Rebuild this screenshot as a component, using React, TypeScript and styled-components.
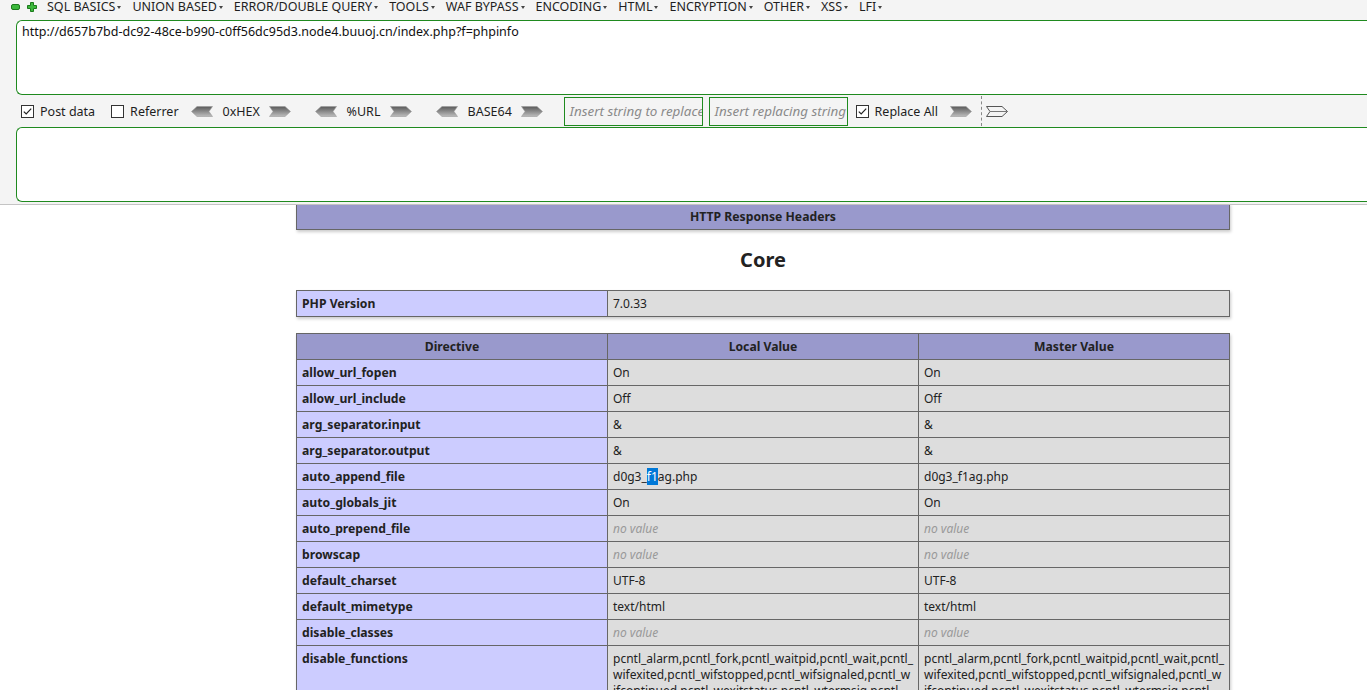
import React from "react";
import styled, { createGlobalStyle } from "styled-components";

const GlobalStyle = createGlobalStyle`
  html, body { margin: 0; padding: 0; background: #ffffff; }
  body { font-family: "Noto Sans", "Open Sans", sans-serif; color: #222; }
  * { box-sizing: border-box; }
`;

const Page = styled.div`
  width: 1367px;
  height: 690px;
  overflow: hidden;
  display: flex;
  flex-direction: column;
`;

const HackBar = styled.div`
  flex: none;
  height: 205px;
  background: #f4f4f4;
  border-bottom: 1px solid #c4c4c4;
  display: flex;
  flex-direction: column;
`;

const MenuBar = styled.div`
  height: 14px;
  display: flex;
  align-items: center;
  padding-left: 11px;
  font-size: 12.5px;
  line-height: 14px;
  color: #1e1e1e;
`;

const IconSlot = styled.span<{ $w: number }>`
  display: inline-flex;
  width: ${(p) => p.$w}px;
  height: 14px;
  align-items: center;
`;

const MenuItem = styled.span`
  display: inline-flex;
  align-items: center;
  margin-right: 11px;
  white-space: nowrap;
`;

const Caret = styled.span`
  display: inline-block;
  width: 0;
  height: 0;
  margin-left: 2px;
  margin-top: 1px;
  border-left: 2.5px solid transparent;
  border-right: 2.5px solid transparent;
  border-top: 3px solid #444;
`;

const AreaRow = styled.div<{ $top: number }>`
  margin-top: ${(p) => p.$top}px;
  padding-left: 16px;
  display: flex;
`;

const Area = styled.div`
  flex: 1;
  height: 75px;
  background: #ffffff;
  border: 1px solid #1f8a1f;
  border-right: none;
  border-radius: 6px 0 0 6px;
  padding: 3px 5px;
  font-size: 12.5px;
  line-height: 16px;
  color: #111;
  white-space: nowrap;
`;

const ToolRow = styled.div`
  height: 32px;
  display: flex;
  align-items: center;
  padding-left: 21px;
  font-size: 12.5px;
  color: #1e1e1e;
`;

const Check = styled.label<{ $gap: number }>`
  display: inline-flex;
  align-items: center;
  margin-right: ${(p) => p.$gap}px;
  white-space: nowrap;
  svg { margin-right: 6px; flex: none; }
`;

const Encoder = styled.span<{ $gap: number }>`
  display: inline-flex;
  align-items: center;
  margin-right: ${(p) => p.$gap}px;
  white-space: nowrap;
`;

const EncLabel = styled.span<{ $w: number }>`
  display: inline-block;
  width: ${(p) => p.$w}px;
  margin: 0 9px 0 10px;
`;

const ReplaceInput = styled.div<{ $gap: number }>`
  flex: none;
  width: 139px;
  height: 29px;
  margin-right: ${(p) => p.$gap}px;
  border: 1px solid #1f8a1f;
  background: #f4f4f4;
  padding: 0 5px;
  display: flex;
  align-items: center;
  overflow: hidden;
  white-space: nowrap;
  font-style: italic;
  font-size: 13.4px;
  color: #8a8a8a;
`;

const Dashed = styled.span`
  width: 0;
  height: 30px;
  border-left: 1px dashed #888;
  margin: 0 4px 0 9px;
`;

const Viewport = styled.div`
  flex: 1;
  overflow: hidden;
  background: #ffffff;
`;

const Content = styled.div`
  margin-top: -2px;
  padding-left: 296px;
  font-size: 12px;
`;

const InfoTable = styled.table<{ $gap?: number }>`
  border-collapse: collapse;
  border: 0;
  width: 934px;
  table-layout: fixed;
  box-shadow: 1px 2px 3px #ccc;
  margin-bottom: ${(p) => p.$gap ?? 0}px;
`;

const Cell = styled.td`
  border: 1px solid #666;
  padding: 4px 5px;
  vertical-align: baseline;
  font-size: 12.2px;
  line-height: 17px;
  color: #222;
`;

const HeadCell = styled.th`
  border: 1px solid #666;
  padding: 4px 5px;
  font-size: 12.2px;
  line-height: 17px;
  background: #9999cc;
  font-weight: bold;
  text-align: center;
  color: #222;
`;

const KeyCell = styled(Cell)`
  background: #ccccff;
  font-weight: bold;
`;

const ValCell = styled(Cell)`
  background: #dddddd;
  font-size: 12px;
  word-wrap: break-word;
  overflow-wrap: anywhere;
  line-height: 16px;
`;

const NoValue = styled.i`
  color: #999;
`;

const Sel = styled.span`
  background: #0078d7;
  color: #ffffff;
`;

const Heading = styled.h2`
  margin: 17px 0;
  width: 934px;
  text-align: center;
  font-size: 20px;
  line-height: 26px;
  font-weight: bold;
  color: #222;
`;

const Minus = () => (
  <svg width="9" height="6" viewBox="0 0 9 6">
    <rect x="0.5" y="0.5" width="8" height="5" rx="1.5" fill="#3cb83c" stroke="#1c7a1c" />
  </svg>
);

const Plus = () => (
  <svg width="10" height="10" viewBox="0 0 10 10">
    <path d="M3.5 0.5h3v3h3v3h-3v3h-3v-3h-3v-3h3z" fill="#3cb83c" stroke="#1c7a1c" strokeWidth="1" />
  </svg>
);

const CheckBox = ({ on }: { on: boolean }) => (
  <svg width="13" height="13" viewBox="0 0 13 13">
    <rect x="0.5" y="0.5" width="12" height="12" fill="#fff" stroke="#333" />
    {on && <path d="M2.8 6.6 L5.2 9 L10.2 3.6" fill="none" stroke="#222" strokeWidth="1.2" />}
  </svg>
);

const ArrowLeft = () => (
  <svg width="22" height="11" viewBox="0 0 22 11">
    <defs>
      <linearGradient id="gl" x1="0" y1="0" x2="0" y2="1">
        <stop offset="0" stopColor="#5a5a5a" />
        <stop offset="1" stopColor="#bdbdbd" />
      </linearGradient>
    </defs>
    <path d="M0.5 5.5 L6 0.5 H21.5 L18 5.5 L21.5 10.5 H6 Z" fill="url(#gl)" stroke="#9a9a9a" strokeWidth="0.6" />
  </svg>
);

const ArrowRight = ({ hollow }: { hollow?: boolean }) => (
  <svg width="22" height="11" viewBox="0 0 22 11">
    <defs>
      <linearGradient id="gr" x1="0" y1="0" x2="0" y2="1">
        <stop offset="0" stopColor="#5a5a5a" />
        <stop offset="1" stopColor="#bdbdbd" />
      </linearGradient>
    </defs>
    <path
      d="M0.5 0.5 H16 L21.5 5.5 L16 10.5 H0.5 L4 5.5 Z"
      fill={hollow ? "#f4f4f4" : "url(#gr)"}
      stroke={hollow ? "#555" : "#9a9a9a"}
      strokeWidth={hollow ? 1 : 0.6}
    />
    {hollow && <path d="M4 5.5 H21" stroke="#777" strokeWidth="1" />}
  </svg>
);

const menus = [
  "SQL BASICS",
  "UNION BASED",
  "ERROR/DOUBLE QUERY",
  "TOOLS",
  "WAF BYPASS",
  "ENCODING",
  "HTML",
  "ENCRYPTION",
  "OTHER",
  "XSS",
  "LFI",
];

type Row = { k: string; l: React.ReactNode; m: React.ReactNode };

const nv = <NoValue>no value</NoValue>;

const disable =
  "pcntl_alarm,pcntl_fork,pcntl_waitpid,pcntl_wait,pcntl_wifexited,pcntl_wifstopped,pcntl_wifsignaled,pcntl_wifcontinued,pcntl_wexitstatus,pcntl_wtermsig,pcntl_wstopsig,pcntl_signal,pcntl_signal_get_handler,pcntl_signal_dispatch,pcntl_get_last_error,pcntl_strerror,pcntl_sigprocmask,pcntl_sigwaitinfo,pcntl_sigtimedwait,pcntl_exec,pcntl_getpriority,pcntl_setpriority,pcntl_async_signals,";

const rows: Row[] = [
  { k: "allow_url_fopen", l: "On", m: "On" },
  { k: "allow_url_include", l: "Off", m: "Off" },
  { k: "arg_separator.input", l: "&", m: "&" },
  { k: "arg_separator.output", l: "&", m: "&" },
  {
    k: "auto_append_file",
    l: (
      <>
        d0g3_<Sel>f1</Sel>ag.php
      </>
    ),
    m: "d0g3_f1ag.php",
  },
  { k: "auto_globals_jit", l: "On", m: "On" },
  { k: "auto_prepend_file", l: nv, m: nv },
  { k: "browscap", l: nv, m: nv },
  { k: "default_charset", l: "UTF-8", m: "UTF-8" },
  { k: "default_mimetype", l: "text/html", m: "text/html" },
  { k: "disable_classes", l: nv, m: nv },
  { k: "disable_functions", l: disable, m: disable },
];

export default function App() {
  return (
    <>
      <GlobalStyle />
      <Page>
        <HackBar>
          <MenuBar>
            <IconSlot $w={16}>
              <Minus />
            </IconSlot>
            <IconSlot $w={20}>
              <Plus />
            </IconSlot>
            {menus.map((m) => (
              <MenuItem key={m}>
                {m}
                <Caret />
              </MenuItem>
            ))}
          </MenuBar>
          <AreaRow $top={6}>
            <Area>http://d657b7bd-dc92-48ce-b990-c0ff56dc95d3.node4.buuoj.cn/index.php?f=phpinfo</Area>
          </AreaRow>
          <ToolRow>
            <Check $gap={16}>
              <CheckBox on />
              Post data
            </Check>
            <Check $gap={12}>
              <CheckBox on={false} />
              Referrer
            </Check>
            <Encoder $gap={24}>
              <ArrowLeft />
              <EncLabel $w={37}>0xHEX</EncLabel>
              <ArrowRight />
            </Encoder>
            <Encoder $gap={24}>
              <ArrowLeft />
              <EncLabel $w={34}>%URL</EncLabel>
              <ArrowRight />
            </Encoder>
            <Encoder $gap={21}>
              <ArrowLeft />
              <EncLabel $w={44}>BASE64</EncLabel>
              <ArrowRight />
            </Encoder>
            <ReplaceInput $gap={6}>Insert string to replace</ReplaceInput>
            <ReplaceInput $gap={8}>Insert replacing string</ReplaceInput>
            <Check $gap={12}>
              <CheckBox on />
              Replace All
            </Check>
            <ArrowRight />
            <Dashed />
            <ArrowRight hollow />
          </ToolRow>
          <AreaRow $top={0}>
            <Area />
          </AreaRow>
        </HackBar>
        <Viewport>
          <Content>
            <InfoTable>
              <tbody>
                <tr>
                  <HeadCell>HTTP Response Headers</HeadCell>
                </tr>
              </tbody>
            </InfoTable>
            <Heading>Core</Heading>
            <InfoTable $gap={16}>
              <colgroup>
                <col style={{ width: 311 }} />
                <col />
              </colgroup>
              <tbody>
                <tr>
                  <KeyCell>PHP Version</KeyCell>
                  <ValCell>7.0.33</ValCell>
                </tr>
              </tbody>
            </InfoTable>
            <InfoTable>
              <colgroup>
                <col style={{ width: 311 }} />
                <col style={{ width: 311 }} />
                <col />
              </colgroup>
              <tbody>
                <tr>
                  <HeadCell>Directive</HeadCell>
                  <HeadCell>Local Value</HeadCell>
                  <HeadCell>Master Value</HeadCell>
                </tr>
                {rows.map((r) => (
                  <tr key={r.k}>
                    <KeyCell>{r.k}</KeyCell>
                    <ValCell>{r.l}</ValCell>
                    <ValCell>{r.m}</ValCell>
                  </tr>
                ))}
              </tbody>
            </InfoTable>
          </Content>
        </Viewport>
      </Page>
    </>
  );
}
